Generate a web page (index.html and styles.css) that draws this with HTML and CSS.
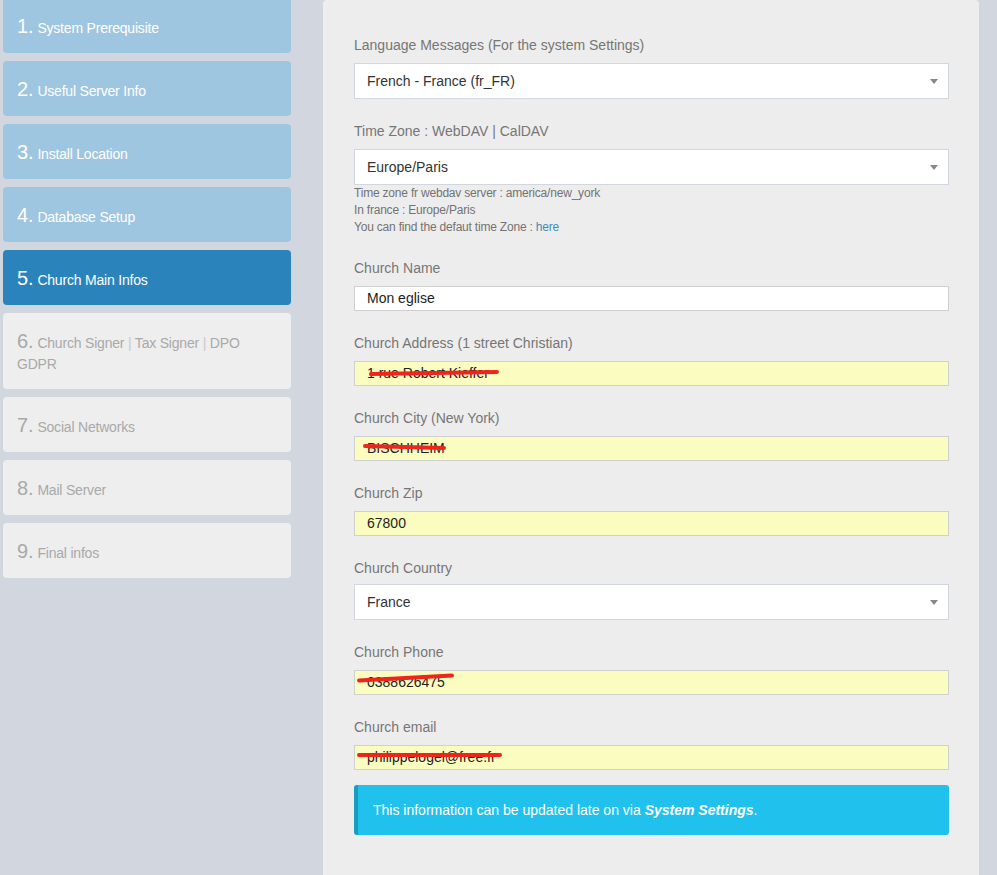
FILE: index.html
```html
<!DOCTYPE html>
<html>
<head>
<meta charset="utf-8">
<link rel="stylesheet" href="styles.css">
</head>
<body>
<div class="layout">
  <aside class="sidebar">
    <div class="step done"><span class="num">1.</span> System Prerequisite</div>
    <div class="step done"><span class="num">2.</span> Useful Server Info</div>
    <div class="step done"><span class="num">3.</span> Install Location</div>
    <div class="step done"><span class="num">4.</span> Database Setup</div>
    <div class="step active"><span class="num">5.</span> Church Main Infos</div>
    <div class="step todo"><span class="num">6.</span> Church Signer<span class="pipe"> | </span>Tax Signer<span class="pipe"> | </span>DPO GDPR</div>
    <div class="step todo"><span class="num">7.</span> Social Networks</div>
    <div class="step todo"><span class="num">8.</span> Mail Server</div>
    <div class="step todo"><span class="num">9.</span> Final infos</div>
  </aside>
  <main class="panel">
    <div class="group">
      <div class="label">Language Messages (For the system Settings)</div>
      <div class="select">French - France (fr_FR)<span class="caret"></span></div>
    </div>
    <div class="group">
      <div class="label">Time Zone : WebDAV | CalDAV</div>
      <div class="select">Europe/Paris<span class="caret"></span></div>
      <div class="help">Time zone fr webdav server : america/new_york<br>In france : Europe/Paris<br>You can find the defaut time Zone : <a class="link">here</a></div>
    </div>
    <div class="group">
      <div class="label">Church Name</div>
      <div class="input">Mon eglise</div>
    </div>
    <div class="group">
      <div class="label">Church Address (1 street Christian)</div>
      <div class="input filled"><span class="redact r-addr">1 rue Robert Kieffer</span></div>
    </div>
    <div class="group">
      <div class="label">Church City (New York)</div>
      <div class="input filled"><span class="redact r-city">BISCHHEIM</span></div>
    </div>
    <div class="group">
      <div class="label">Church Zip</div>
      <div class="input filled">67800</div>
    </div>
    <div class="group">
      <div class="label tight">Church Country</div>
      <div class="select">France<span class="caret"></span></div>
    </div>
    <div class="group">
      <div class="label">Church Phone</div>
      <div class="input filled"><span class="redact r-phone">0388626475</span></div>
    </div>
    <div class="group last">
      <div class="label">Church email</div>
      <div class="input filled"><span class="redact r-mail">philippelogel@free.fr</span></div>
    </div>
    <div class="callout">This information can be updated late on via <b><i>System Settings</i></b>.</div>
  </main>
</div>
</body>
</html>
```
FILE: styles.css
```css
html, body {
  margin: 0;
  padding: 0;
}
body {
  background: #d2d6df;
  font-family: "Liberation Sans", Arial, sans-serif;
  font-size: 14px;
  color: #333;
  overflow: hidden;
}
.layout {
  display: flex;
  align-items: stretch;
  min-height: 875px;
}
.sidebar {
  width: 288px;
  padding-left: 3px;
  margin-right: 32px;
  margin-top: -2px;
  display: flex;
  flex-direction: column;
  gap: 8px;
}
.step {
  border-radius: 4px;
  padding: 20px 14px 14px;
  line-height: 21px;
  font-size: 14px;
  letter-spacing: -0.2px;
}
.step .num {
  font-size: 20px;
  line-height: 0;
  letter-spacing: 0;
}
.step.done {
  background: #9fc6e0;
  color: #fff;
}
.step.active {
  background: #2b83bc;
  color: #fff;
}
.step.todo {
  background: #eeeeee;
  color: #a9a9a9;
}
.step .pipe {
  color: #c9c9c9;
}
.panel {
  width: 595px;
  background: #ededed;
  padding: 35px 30px 0 31px;
  border-radius: 4px 4px 0 0;
}
.group {
  margin-bottom: 22px;
}
.group.last {
  margin-bottom: 15px;
}
.label {
  line-height: 21px;
  color: #767676;
  margin-bottom: 7px;
}
.label.tight {
  margin-bottom: 5px;
}
.select {
  position: relative;
  box-sizing: border-box;
  height: 36px;
  line-height: 34px;
  background: #fff;
  border: 1px solid #d2d6de;
  padding-left: 12px;
  color: #333;
}
.caret {
  position: absolute;
  right: 10px;
  top: 15px;
  width: 0;
  height: 0;
  border-left: 4px solid transparent;
  border-right: 4px solid transparent;
  border-top: 5px solid #888;
}
.input {
  box-sizing: border-box;
  height: 25px;
  line-height: 23px;
  background: #fff;
  border: 1px solid #d0d0d0;
  padding-left: 12px;
  color: #222;
}
.input.filled {
  background: #fafcc0;
}
.help {
  font-size: 12px;
  line-height: 17px;
  color: #737373;
  letter-spacing: -0.2px;
}
.link {
  color: #3c8dbc;
}
.redact {
  position: relative;
  display: inline-block;
}
.redact::after {
  content: "";
  position: absolute;
  left: 0;
  right: -2px;
  top: 9px;
  height: 4px;
  background: #f0241b;
  border-radius: 2px;
}
.r-addr::after {
  left: 2px;
  right: -10px;
  transform: rotate(-1deg);
}
.r-city::after {
  left: -4px;
  right: -1px;
  top: 8px;
  transform: rotate(1.5deg);
}
.r-phone::after {
  left: -10px;
  right: -9px;
  top: 5px;
  transform: rotate(-3deg);
}
.r-mail::after {
  left: -10px;
  right: -6px;
  top: 7px;
}
.callout {
  box-sizing: border-box;
  height: 50px;
  line-height: 20px;
  padding: 15px;
  background: #20c1ed;
  border-left: 4px solid #1a9cbf;
  border-radius: 3px;
  color: #fff;
}
```
